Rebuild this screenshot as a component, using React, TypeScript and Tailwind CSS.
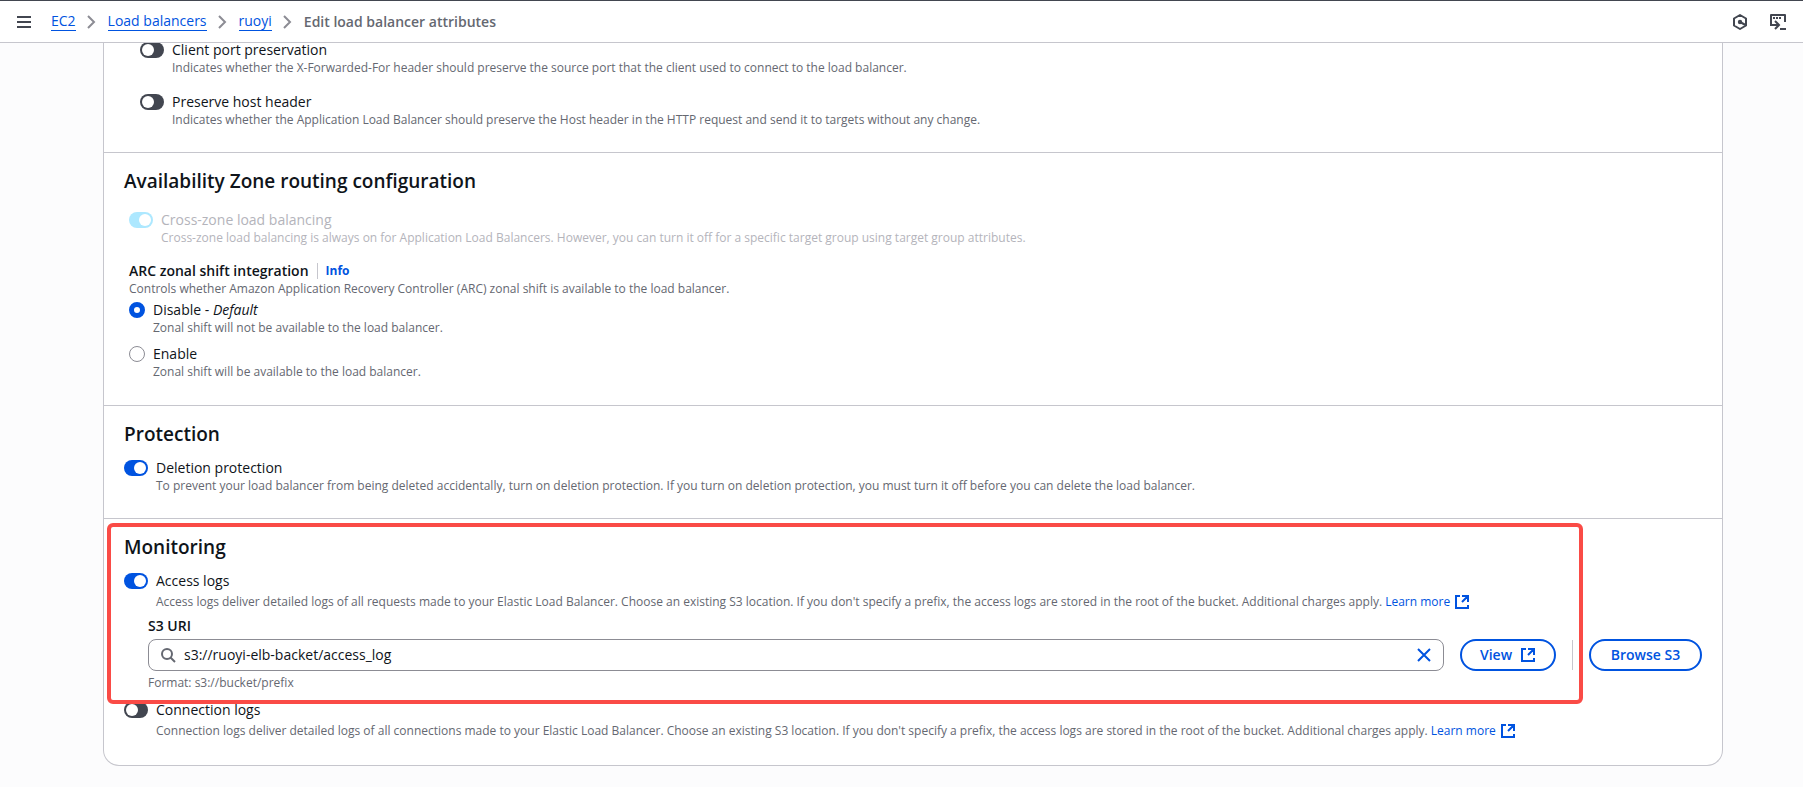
import React, { useState } from "react";

const HexIcon = () => (
    <svg width="16" height="16" viewBox="0 0 16 16" fill="none">
        <path
            d="M8 1 14 4.5v7L8 15 2 11.5v-7L8 1Z"
            stroke="currentColor"
            strokeWidth="2"
            strokeLinejoin="round"
        />
        <circle cx="8" cy="8" r="2.2" fill="currentColor" />
        <path d="m8 8 5.5 3" stroke="currentColor" strokeWidth="2" />
    </svg>
);

const CloudShellIcon = () => (
    <svg width="16" height="16" viewBox="0 0 16 16" fill="none">
        <path
            d="M1 11V1h14v7"
            stroke="currentColor"
            strokeWidth="2"
            strokeLinejoin="round"
        />
        <path
            d="M3 3h2v2H3zM6 3h2v2H6zM9 3h2v2H9zM10 14h6v2h-6z"
            fill="currentColor"
        />
        <path
            d="M0 11h8M5 7l4 4-4 4"
            stroke="currentColor"
            strokeWidth="2"
        />
    </svg>
);

const ExternalIcon = () => (
    <svg width="16" height="16" viewBox="0 0 16 16" fill="none">
        <path
            d="M6 2H2v12h12v-3M8 2h6v6M14 2 8 8"
            stroke="currentColor"
            strokeWidth="2"
        />
    </svg>
);

const Chevron = () => (
    <svg
        width="16"
        height="16"
        viewBox="0 0 16 16"
        fill="none"
        className="text-[#8c8c94]"
    >
        <path d="m4 2 6 6-6 6" stroke="currentColor" strokeWidth="2" />
    </svg>
);

const Crumb = ({ children }: { children: React.ReactNode }) => (
    <li className="flex items-center gap-2">
        <a
            href="#"
            className="border-b border-[#0053e0] leading-[18px] text-[#0053e0]"
        >
            {children}
        </a>
        <Chevron />
    </li>
);

const LearnMore = () => (
    <a href="#" className="inline-flex items-center gap-1 text-[#0053e0]">
        Learn more
        <ExternalIcon />
    </a>
);

type ToggleProps = {
    id: string;
    label: string;
    on?: boolean;
    disabled?: boolean;
    tall?: boolean;
    children: React.ReactNode;
};

const Toggle = ({ id, label, on, disabled, tall, children }: ToggleProps) => (
    <div className="flex items-start gap-2">
        <input
            id={id}
            type="checkbox"
            role="switch"
            defaultChecked={on}
            disabled={disabled}
            aria-describedby={`${id}-hint`}
            className="mt-[2px] flex h-4 w-6 shrink-0 appearance-none items-center rounded-full bg-[#424650] px-[2px] before:size-3 before:rounded-full before:bg-white checked:justify-end checked:bg-[#0053e0] disabled:bg-[#ade8ff]"
        />
        <div>
            <label
                htmlFor={id}
                className={`block leading-5 ${disabled ? "text-[#b4b4bb]" : "text-[#0f141a]"}`}
            >
                {label}
            </label>
            <p
                id={`${id}-hint`}
                className={`text-xs ${tall ? "mt-px leading-5" : "leading-4"} ${disabled ? "text-[#b4b4bb]" : "text-[#656871]"}`}
            >
                {children}
            </p>
        </div>
    </div>
);

type RadioProps = {
    id: string;
    label: React.ReactNode;
    hint: string;
    checked: boolean;
    onChange: () => void;
};

const Radio = ({ id, label, hint, checked, onChange }: RadioProps) => (
    <div className="flex items-start gap-2">
        <input
            id={id}
            type="radio"
            name="zonal-shift"
            checked={checked}
            onChange={onChange}
            className="mt-[2px] size-4 shrink-0 appearance-none rounded-full border border-[#8c8c94] bg-white checked:border-5 checked:border-[#0053e0]"
        />
        <div>
            <label htmlFor={id} className="block leading-5">
                {label}
            </label>
            <p className="text-xs leading-4 text-[#656871]">{hint}</p>
        </div>
    </div>
);

const Section = ({
    title,
    children,
}: {
    title: string;
    children: React.ReactNode;
}) => (
    <section className="border-t border-[#c6c6cd] px-5 pt-4 pb-6">
        <h2 className="mb-3 text-[19px] leading-6 font-semibold">{title}</h2>
        {children}
    </section>
);

export default function App() {
    const [shift, setShift] = useState("disable");
    const [uri, setUri] = useState("s3://ruoyi-elb-backet/access_log");

    return (
        <div className="min-h-screen bg-[#fcfcfd] font-['Open_Sans','Noto_Sans',sans-serif] text-sm text-[#0f141a]">
            <header className="sticky top-0 z-10 flex h-[43px] items-center border-t border-b border-t-[#424650] border-b-[#c6c6cd] bg-white pr-[17px] pl-4">
                <button aria-label="Open navigation" className="text-[#424650]">
                    <svg width="16" height="16" viewBox="0 0 16 16">
                        <path
                            d="M1 3h14M1 8h14M1 13h14"
                            stroke="currentColor"
                            strokeWidth="2"
                        />
                    </svg>
                </button>
                <nav aria-label="Breadcrumbs" className="ml-[19px]">
                    <ol className="flex items-center gap-2">
                        <Crumb>EC2</Crumb>
                        <Crumb>Load balancers</Crumb>
                        <Crumb>ruoyi</Crumb>
                        <li className="font-semibold text-[#656871]">
                            Edit load balancer attributes
                        </li>
                    </ol>
                </nav>
                <div className="ml-auto flex gap-[22px] text-[#424650]">
                    <button aria-label="Assistant">
                        <HexIcon />
                    </button>
                    <button aria-label="CloudShell">
                        <CloudShellIcon />
                    </button>
                </div>
            </header>

            <main className="pr-20 pb-5 pl-[103px]">
                <div className="-mt-[3px] rounded-b-2xl border border-t-0 border-[#c6c6cd] bg-white">
                    <div className="space-y-4 pb-6 pl-9">
                        <Toggle id="client-port" label="Client port preservation">
                            Indicates whether the X-Forwarded-For header should
                            preserve the source port that the client used to
                            connect to the load balancer.
                        </Toggle>
                        <Toggle id="host-header" label="Preserve host header">
                            Indicates whether the Application Load Balancer
                            should preserve the Host header in the HTTP request
                            and send it to targets without any change.
                        </Toggle>
                    </div>

                    <Section title="Availability Zone routing configuration">
                        <div className="pt-[5px] pb-px pl-[5px]">
                            <Toggle
                                id="cross-zone"
                                label="Cross-zone load balancing"
                                on
                                disabled
                            >
                                Cross-zone load balancing is always on for
                                Application Load Balancers. However, you can
                                turn it off for a specific target group using
                                target group attributes.
                            </Toggle>
                            <div
                                role="radiogroup"
                                aria-labelledby="arc-label"
                                className="mt-[15px]"
                            >
                                <div className="flex h-5 items-center">
                                    <span
                                        id="arc-label"
                                        className="font-semibold"
                                    >
                                        ARC zonal shift integration
                                    </span>
                                    <span className="mx-2 h-4 w-px bg-[#c6c6cd]" />
                                    <a
                                        href="#"
                                        className="text-xs font-bold text-[#0053e0]"
                                    >
                                        Info
                                    </a>
                                </div>
                                <p className="mb-[3px] text-xs leading-4 text-[#656871]">
                                    Controls whether Amazon Application Recovery
                                    Controller (ARC) zonal shift is available to
                                    the load balancer.
                                </p>
                                <div className="space-y-2">
                                    <Radio
                                        id="shift-disable"
                                        label={
                                            <>
                                                Disable - <em>Default</em>
                                            </>
                                        }
                                        hint="Zonal shift will not be available to the load balancer."
                                        checked={shift === "disable"}
                                        onChange={() => setShift("disable")}
                                    />
                                    <Radio
                                        id="shift-enable"
                                        label="Enable"
                                        hint="Zonal shift will be available to the load balancer."
                                        checked={shift === "enable"}
                                        onChange={() => setShift("enable")}
                                    />
                                </div>
                            </div>
                        </div>
                    </Section>

                    <Section title="Protection">
                        <Toggle
                            id="deletion"
                            label="Deletion protection"
                            on
                        >
                            To prevent your load balancer from being deleted
                            accidentally, turn on deletion protection. If you
                            turn on deletion protection, you must turn it off
                            before you can delete the load balancer.
                        </Toggle>
                    </Section>

                    <div className="relative">
                        <Section title="Monitoring">
                            <Toggle id="access-logs" label="Access logs" on tall>
                                Access logs deliver detailed logs of all
                                requests made to your Elastic Load Balancer.
                                Choose an existing S3 location. If you don't
                                specify a prefix, the access logs are stored in
                                the root of the bucket. Additional charges
                                apply. <LearnMore />
                            </Toggle>
                            <div className="mt-1 mb-[9px] pl-6">
                                <label
                                    htmlFor="s3-uri"
                                    className="block leading-5 font-semibold"
                                >
                                    S3 URI
                                </label>
                                <div className="mt-[3px] flex items-center gap-4">
                                    <div className="flex h-8 flex-1 items-center gap-2 rounded-lg border border-[#8c8c94] px-[11px]">
                                        <svg
                                            width="16"
                                            height="16"
                                            viewBox="0 0 16 16"
                                            fill="none"
                                            className="text-[#656871]"
                                        >
                                            <circle
                                                cx="7"
                                                cy="7"
                                                r="5"
                                                stroke="currentColor"
                                                strokeWidth="2"
                                            />
                                            <path
                                                d="m15 15-4.5-4.5"
                                                stroke="currentColor"
                                                strokeWidth="2"
                                            />
                                        </svg>
                                        <input
                                            id="s3-uri"
                                            type="text"
                                            value={uri}
                                            onChange={(e) =>
                                                setUri(e.target.value)
                                            }
                                            className="min-w-0 flex-1 outline-none"
                                        />
                                        <button
                                            aria-label="Clear"
                                            onClick={() => setUri("")}
                                            className="text-[#0053e0]"
                                        >
                                            <svg
                                                width="16"
                                                height="16"
                                                viewBox="0 0 16 16"
                                            >
                                                <path
                                                    d="m2 2 12 12M14 2 2 14"
                                                    stroke="currentColor"
                                                    strokeWidth="2"
                                                />
                                            </svg>
                                        </button>
                                    </div>
                                    <button className="flex h-8 w-24 items-center justify-center gap-2 rounded-full border-2 border-[#0053e0] font-semibold text-[#0053e0]">
                                        View
                                        <ExternalIcon />
                                    </button>
                                    <span className="h-[30px] w-px bg-[#c6c6cd]" />
                                    <button className="h-8 w-[113px] rounded-full border-2 border-[#0053e0] font-semibold text-[#0053e0]">
                                        Browse S3
                                    </button>
                                </div>
                                <p className="mt-1 text-xs leading-4 text-[#656871]">
                                    Format: s3://bucket/prefix
                                </p>
                            </div>
                            <Toggle
                                id="connection-logs"
                                label="Connection logs"
                                tall
                            >
                                Connection logs deliver detailed logs of all
                                connections made to your Elastic Load Balancer.
                                Choose an existing S3 location. If you don't
                                specify a prefix, the access logs are stored in
                                the root of the bucket. Additional charges
                                apply. <LearnMore />
                            </Toggle>
                        </Section>
                        <div className="pointer-events-none absolute top-[5px] right-[139px] left-[3px] h-[181px] rounded-md border-4 border-[#fa4b46]" />
                    </div>
                </div>
            </main>
        </div>
    );
}
